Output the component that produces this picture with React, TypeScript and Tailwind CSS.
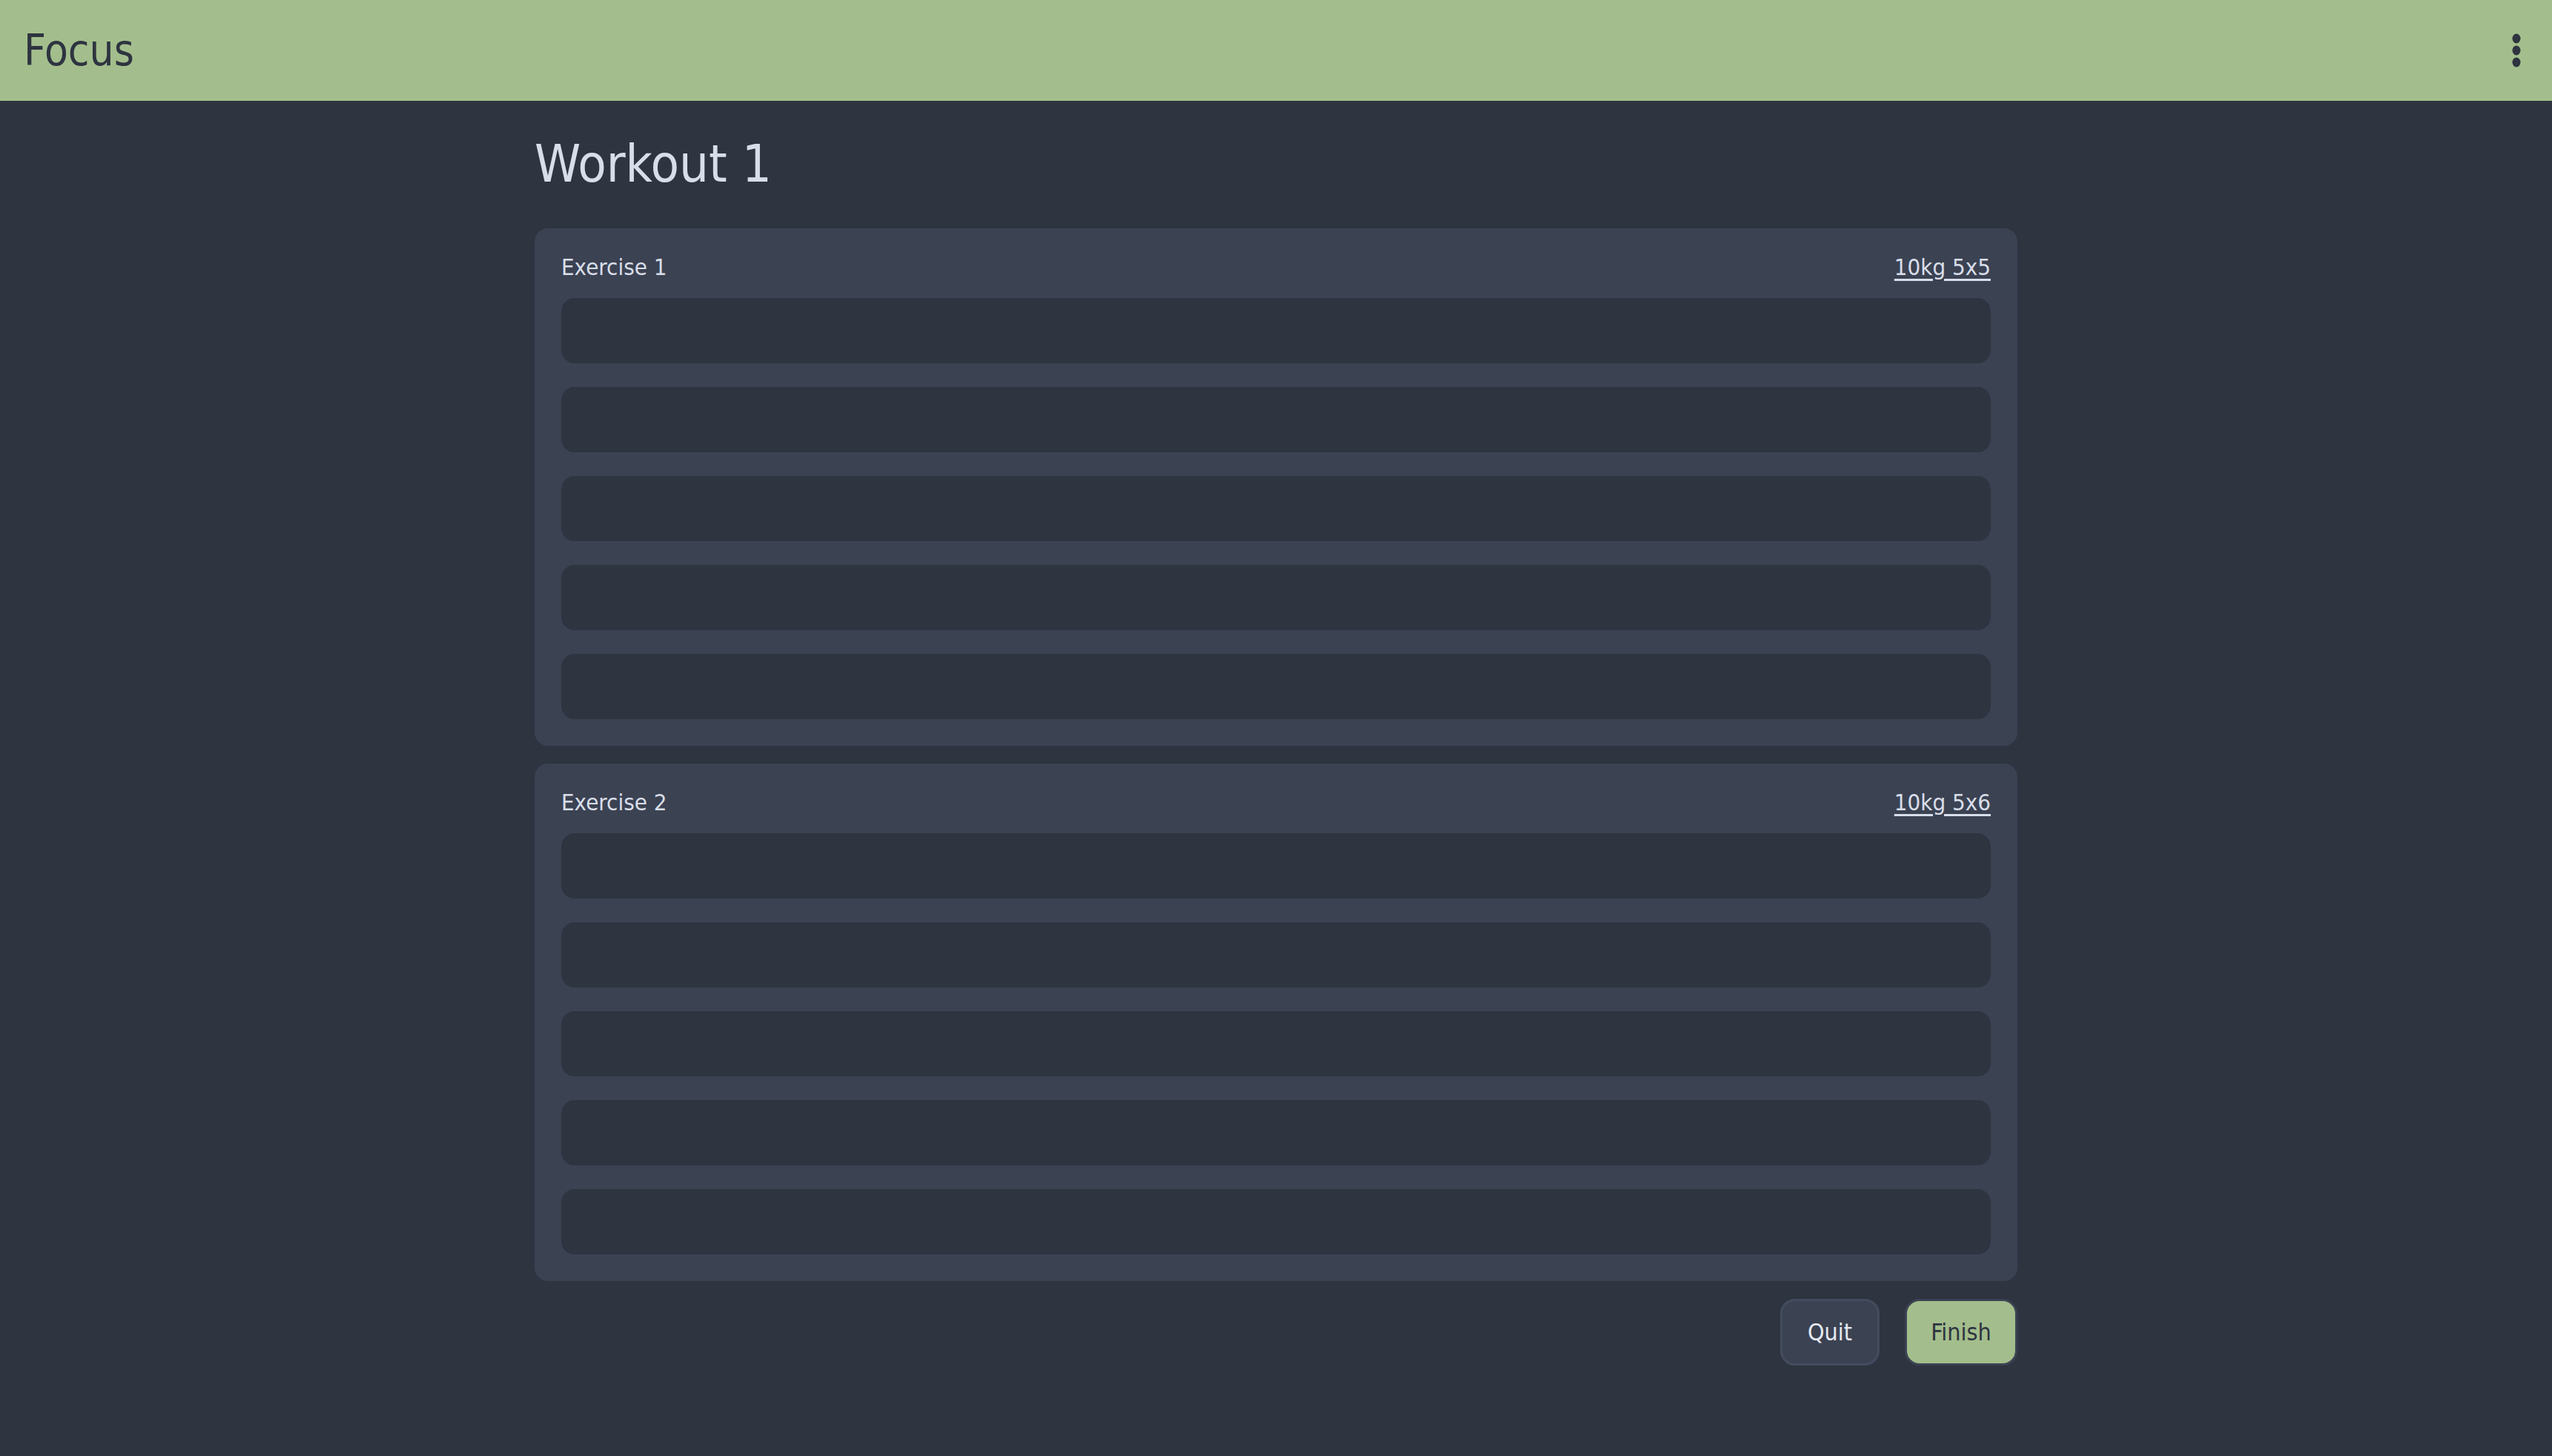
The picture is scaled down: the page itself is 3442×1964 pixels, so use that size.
import React from 'react';

const exercises = [
  { name: 'Exercise 1', spec: '10kg 5x5' },
  { name: 'Exercise 2', spec: '10kg 5x6' },
];

function Kebab() {
  return (
    <svg width="16" height="46" viewBox="0 0 16 46" className="text-[#2e3440]">
      <ellipse cx="8" cy="7" rx="5.5" ry="6.5" fill="currentColor" />
      <ellipse cx="8" cy="23" rx="5.5" ry="6.5" fill="currentColor" />
      <ellipse cx="8" cy="39" rx="5.5" ry="6.5" fill="currentColor" />
    </svg>
  );
}

export default function App() {
  return (
    <div
      className="min-h-screen bg-[#2e3440] text-[#d8dee9]"
      style={{ fontFamily: '"DejaVu Sans Condensed", "DejaVu Sans", sans-serif' }}
    >
      <header className="h-[136px] bg-[#a3be8c] flex items-center justify-between pl-[32px] pr-[40px]">
        <h1 className="text-[58px] text-[#2e3440] leading-none">Focus</h1>
        <Kebab />
      </header>

      <main className="w-[2000px] mx-auto">
        <h2 className="text-[70px] leading-none pt-[50px] pb-[52px] text-[#d8dee9]">Workout 1</h2>

        <div className="flex flex-col gap-[24px]">
          {exercises.map((ex) => (
            <div key={ex.name} className="bg-[#3b4252] rounded-[18px] p-[36px] pt-[34px]">
              <div className="flex items-center justify-between text-[31px] h-[36px] mb-[24px]">
                <span>{ex.name}</span>
                <span className="underline underline-offset-[5px]">{ex.spec}</span>
              </div>
              <div className="flex flex-col gap-[32px]">
                {[0, 1, 2, 3, 4].map((i) => (
                  <div key={i} className="h-[88px] bg-[#2e3440] rounded-[18px]" />
                ))}
              </div>
            </div>
          ))}
        </div>

        <div className="flex justify-end gap-[34px] mt-[24px]">
          <button className="h-[90px] w-[134px] rounded-[20px] bg-[#3b4252] border-[3px] border-[#434c5e] text-[32px] text-[#e5e9f0]">
            Quit
          </button>
          <button className="h-[90px] w-[152px] rounded-[20px] bg-[#a3be8c] border-[3px] border-[#3b4252] text-[32px] text-[#2e3440]">
            Finish
          </button>
        </div>
      </main>
    </div>
  );
}
